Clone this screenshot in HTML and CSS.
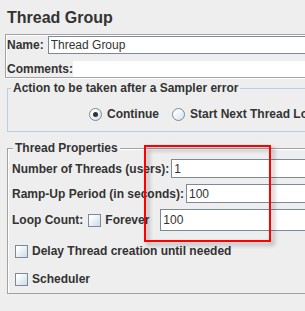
FILE: index.html
```html
<!DOCTYPE html>
<html>
<head>
  <title>Thread Group</title>
  <link rel="stylesheet" href="styles.css">
</head>
<body>
  <div class="page">
    <h1 class="title">Thread Group</h1>

    <div class="name-panel">
      <div class="name-row">
        <label class="lbl" for="name">Name:</label>
        <input class="field" type="text" id="name" value="Thread Group">
      </div>
      <div class="comments-row">
        <label class="lbl" for="comments">Comments:</label>
        <div class="comments" id="comments"></div>
      </div>
    </div>

    <div class="group action-group">
      <span class="group-title">Action to be taken after a Sampler error</span>
      <div class="radios">
        <label class="radio"><span class="radio-dot checked"></span>Continue</label>
        <label class="radio"><span class="radio-dot"></span>Start Next Thread Loop</label>
      </div>
    </div>

    <div class="group props-group">
      <span class="group-title">Thread Properties</span>

      <div class="prop-row row-threads">
        <label class="lbl" for="threads">Number of Threads (users):</label>
        <input class="field" type="text" id="threads" value="1">
      </div>

      <div class="prop-row row-rampup">
        <label class="lbl" for="rampup">Ramp-Up Period (in seconds):</label>
        <input class="field" type="text" id="rampup" value="100">
      </div>

      <div class="prop-row row-loop">
        <label class="lbl" for="loops">Loop Count:</label>
        <label class="check forever"><span class="box"></span>Forever</label>
        <input class="field loop-field" type="text" id="loops" value="100">
      </div>

      <div class="check-row row-delay">
        <label class="check"><span class="box"></span>Delay Thread creation until needed</label>
      </div>

      <div class="check-row row-scheduler">
        <label class="check"><span class="box"></span>Scheduler</label>
      </div>
    </div>

    <!-- annotation drawn over the thread fields -->
    <div class="highlight"></div>
  </div>
</body>
</html>
```

FILE: styles.css
```css
body {
  margin: 0;
  background: #eeeeee;
  font-family: "Liberation Sans", Arial, sans-serif;
  color: #333333;
  overflow: hidden;
}

.page {
  position: relative;
  width: 420px;
}

.title {
  margin: 0;
  padding: 9px 0 0 7px;
  font-size: 16px;
  line-height: 18px;
  font-weight: bold;
}

.lbl {
  font-size: 12px;
  font-weight: bold;
  white-space: nowrap;
}

.field {
  -webkit-appearance: none;
  appearance: none;
  box-sizing: border-box;
  flex: 1;
  min-width: 0;
  height: 19px;
  margin: 0;
  padding: 0 2px;
  border: 1px solid #7a8a99;
  border-radius: 0;
  background: #fff;
  font-family: "Liberation Sans", Arial, sans-serif;
  font-size: 12px;
  color: #333333;
  outline: none;
}

/* name / comments box */
.name-panel {
  margin: 7px 0 0 5px;
  padding: 1px 0 0 0;
  border: 1px solid #a3a3a3;
  box-shadow: inset 1px 1px 0 #fff, 1px 1px 0 #fff;
}

.name-row {
  display: flex;
  align-items: center;
  gap: 4px;
  height: 18px;
  padding-left: 1px;
}

.name-row .field {
  height: 18px;
}

.comments-row {
  display: flex;
  align-items: center;
  height: 16px;
  margin-top: 7px;
  padding-left: 1px;
}

.comments {
  flex: 1;
  height: 16px;
  background: #fff;
}

/* titled groups */
.group {
  margin-left: 7px;
}

.group-title {
  display: block;
  width: fit-content;
  margin: -8px 0 0 4px;
  padding: 0 2px;
  background: #eeeeee;
  font-size: 12px;
  line-height: 14px;
  font-weight: bold;
}

.action-group {
  margin-top: 10px;
  border: 1px solid #b8cfe5;
  padding-bottom: 8px;
}

.action-group .group-title {
  margin-left: 3px;
}

.radios {
  display: flex;
  align-items: center;
  gap: 13px;
  height: 18px;
  margin-top: 10px;
  padding-left: 81px;
}

.radio {
  display: flex;
  align-items: center;
  gap: 5px;
  font-size: 12px;
  font-weight: bold;
  white-space: nowrap;
}

.radio-dot {
  position: relative;
  box-sizing: border-box;
  width: 13px;
  height: 13px;
  border: 1px solid #7a8a99;
  border-radius: 50%;
  background: linear-gradient(135deg, #ffffff 20%, #d4e0ec 100%);
}

.radio-dot.checked::after {
  content: "";
  position: absolute;
  left: 3px;
  top: 3px;
  width: 5px;
  height: 5px;
  border-radius: 50%;
  background: #333333;
}

.props-group {
  margin-top: 16px;
  border: 1px solid #a3a3a3;
  box-shadow: inset 1px 1px 0 #fff, 1px 1px 0 #fff;
  padding-bottom: 4px;
}

.props-group .group-title {
  margin-left: 5px;
}

.prop-row {
  display: flex;
  align-items: center;
  gap: 2px;
  padding-left: 4px;
}

.row-threads {
  height: 19px;
  margin-top: 4px;
}

.row-rampup {
  height: 19px;
  margin-top: 6px;
}

.row-loop {
  height: 22px;
  margin-top: 6px;
}

.loop-field {
  height: 22px;
  margin-left: 9px;
}

.check {
  display: flex;
  align-items: center;
  gap: 4px;
  font-size: 12px;
  font-weight: bold;
  white-space: nowrap;
}

.forever {
  margin-left: 3px;
}

.box {
  box-sizing: border-box;
  width: 13px;
  height: 13px;
  border: 1px solid #7a8a99;
  background: linear-gradient(135deg, #ffffff 15%, #ccdaea 100%);
}

.check-row {
  display: flex;
  align-items: center;
  height: 20px;
  padding-left: 7px;
}

.row-delay {
  margin-top: 10px;
}

.row-scheduler {
  margin-top: 8px;
}

.highlight {
  position: absolute;
  left: 144px;
  top: 145px;
  width: 127px;
  height: 97px;
  box-sizing: border-box;
  border: 2px solid #ff0000;
  filter: drop-shadow(3px 3px 2px rgba(0, 0, 0, 0.35));
}
```
